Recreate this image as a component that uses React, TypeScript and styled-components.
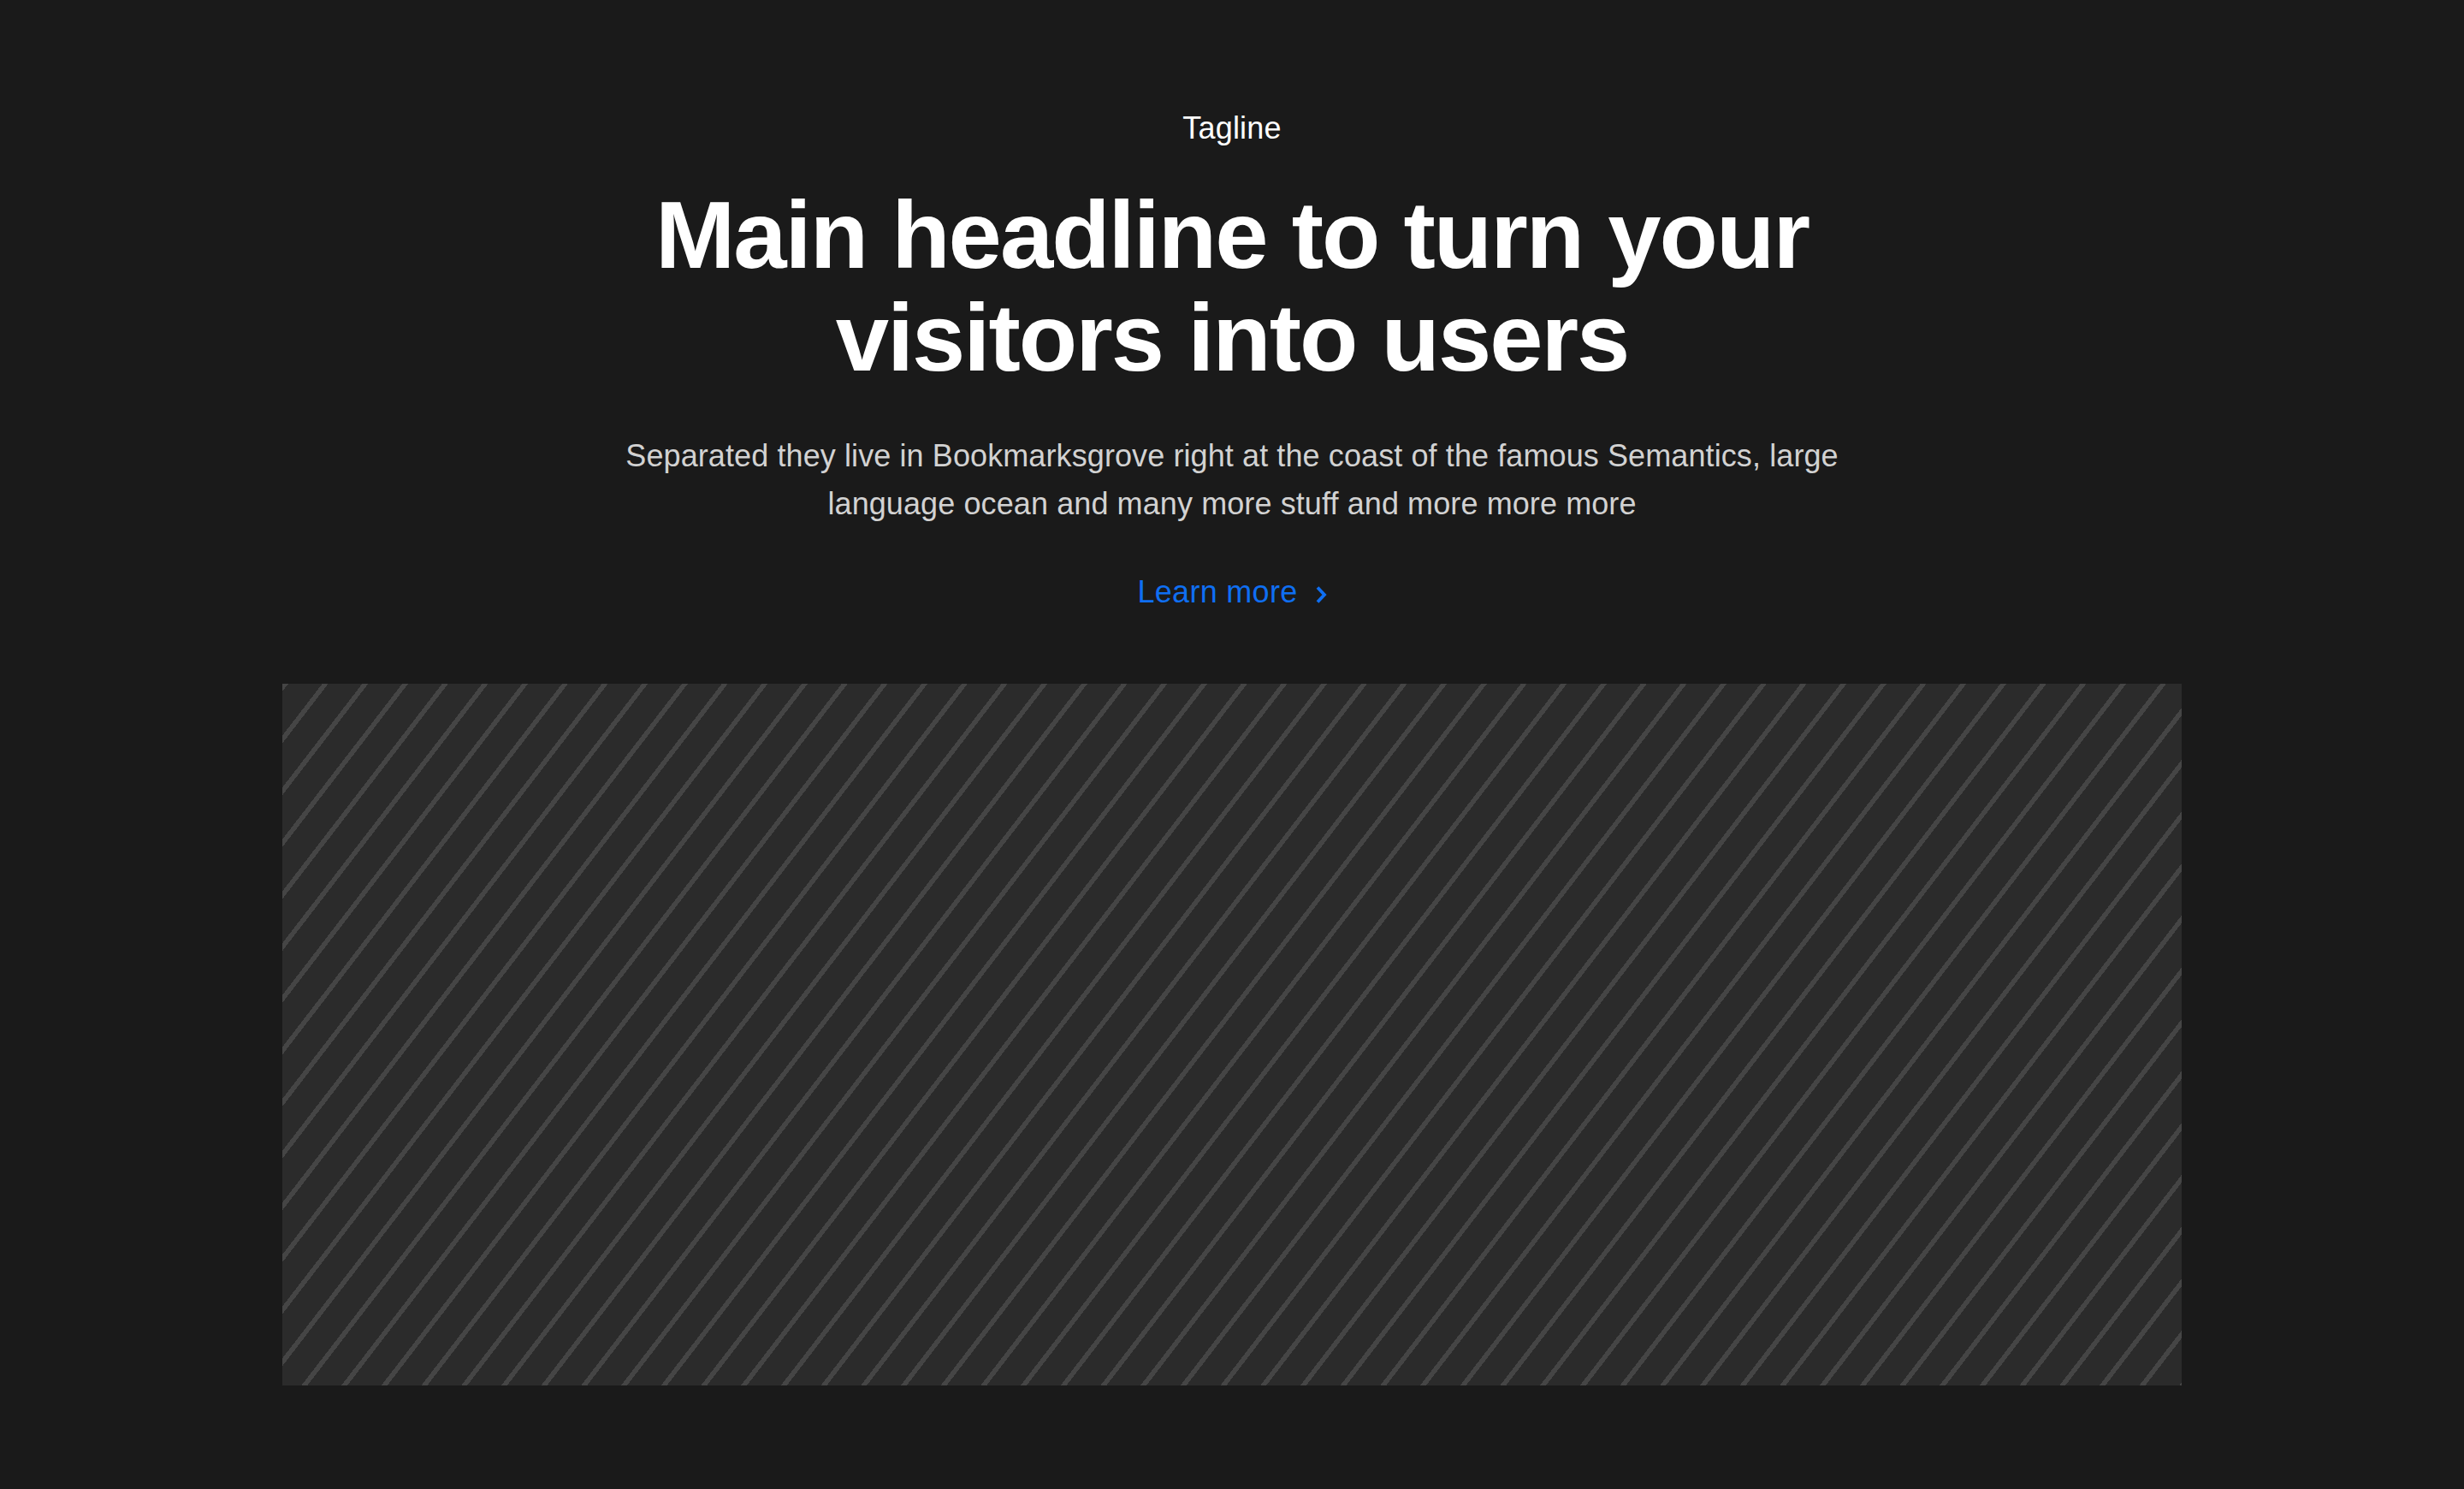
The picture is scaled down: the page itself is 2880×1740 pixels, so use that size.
import React from "react";
import styled, { createGlobalStyle } from "styled-components";

const GlobalStyle = createGlobalStyle`
  html, body {
    margin: 0;
    padding: 0;
    background: #1a1a1a;
  }
  body {
    font-family: "Liberation Sans", Arial, Helvetica, sans-serif;
    -webkit-font-smoothing: antialiased;
  }
`;

const Page = styled.main`
  height: 1740px;
  overflow: hidden;
  background: #1a1a1a;
  display: flex;
  flex-direction: column;
  align-items: center;
  padding: 128px 0 0;
  box-sizing: border-box;
`;

const Header = styled.header`
  display: flex;
  flex-direction: column;
  align-items: center;
  text-align: center;
`;

const Tagline = styled.p`
  margin: 0;
  font-size: 36px;
  line-height: 44px;
  font-weight: 400;
  letter-spacing: 0.2px;
  color: #ffffff;
`;

const Headline = styled.h1`
  margin: 43px 0 0;
  max-width: 1420px;
  font-size: 112px;
  line-height: 120px;
  font-weight: 700;
  letter-spacing: -2px;
  color: #ffffff;
`;

const Lead = styled.p`
  margin: 50px 0 0;
  max-width: 1480px;
  font-size: 36px;
  line-height: 56px;
  font-weight: 400;
  letter-spacing: 0.1px;
  color: #d2d2d2;
`;

const LinkButton = styled.a`
  margin-top: 53px;
  height: 44px;
  display: inline-flex;
  align-items: center;
  gap: 20px;
  font-size: 36px;
  line-height: 44px;
  font-weight: 400;
  letter-spacing: 0.3px;
  color: #0f6ff2;
  text-decoration: none;
  cursor: pointer;
`;

const Chevron = styled.svg`
  display: block;
  width: 14px;
  height: 22px;
  margin-top: 6px;
`;

const Placeholder = styled.div`
  margin-top: 85px;
  flex: none;
  width: 2220px;
  height: 820px;
  background-color: #2b2b2b;
  background-image: repeating-linear-gradient(
    127.6deg,
    #454545 0px,
    #454545 5.5px,
    #2b2b2b 5.5px,
    #2b2b2b 37px
  );
`;

export default function App() {
  return (
    <>
      <GlobalStyle />
      <Page>
        <Header>
          <Tagline>Tagline</Tagline>
          <Headline>Main headline to turn your visitors into users</Headline>
          <Lead>
            Separated they live in Bookmarksgrove right at the coast of the famous Semantics, large
            language ocean and many more stuff and more more more
          </Lead>
          <LinkButton>
            Learn more
            <Chevron viewBox="0 0 14 22" fill="none">
              <path d="M3 2.5 L11 11 L3 19.5" stroke="#0f6ff2" strokeWidth="3.8" strokeLinecap="butt" strokeLinejoin="miter" />
            </Chevron>
          </LinkButton>
        </Header>
        <Placeholder />
      </Page>
    </>
  );
}
